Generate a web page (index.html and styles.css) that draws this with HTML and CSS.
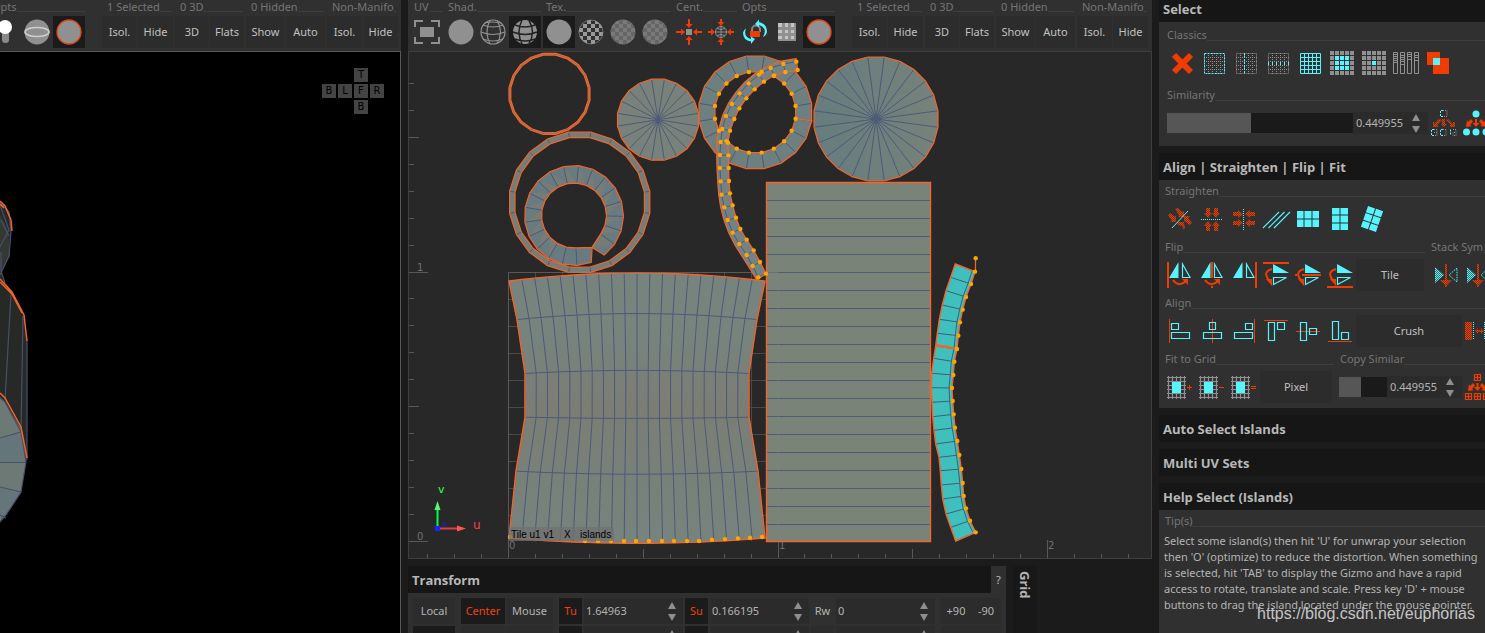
FILE: index.html
```html
<!DOCTYPE html>
<html lang="en">
<head>
<meta charset="utf-8">
<title>UV Editor</title>
<link rel="stylesheet" href="styles.css">
</head>
<body>
<svg class="defs" aria-hidden="true">
  <defs>
    <pattern id="hatch" width="2" height="2" patternUnits="userSpaceOnUse"><path d="M0 0h2v2h-2z" fill="#f03c00" fill-opacity=".35"/><path d="M0 0h1v1h-1zM1 1h1v1h-1z" fill="#f03c00"/></pattern>
    <pattern id="hatchc" width="2" height="2" patternUnits="userSpaceOnUse"><path d="M0 0h2v2h-2z" fill="#55f4ff" fill-opacity=".3"/><path d="M0 0h1v1h-1zM1 1h1v1h-1z" fill="#55f4ff"/></pattern>
    <pattern id="chk" width="8" height="8" patternUnits="userSpaceOnUse"><path d="M0 0h4v4h-4zM4 4h4v4h-4z" fill="#999"/></pattern>
    <pattern id="chk2" width="8" height="8" patternUnits="userSpaceOnUse"><path d="M0 0h8v8h-8z" fill="#797979"/><path d="M0 0h4v4h-4zM4 4h4v4h-4z" fill="#666"/></pattern>
  </defs>
  <symbol id="i-light" viewBox="0 0 32 32"><path d="M13 14h7v10q0 3-3.500 3t-3.500-3z" fill="#8a8a8a"/><circle cx="16" cy="11" r="7" fill="#fff"/></symbol>
  <symbol id="i-halo" viewBox="0 0 32 32"><circle cx="16" cy="16" r="12.500" fill="#909090"/><ellipse cx="16" cy="16" rx="12" ry="4.500" fill="none" stroke="#d0d0d0" stroke-width="1.500"/></symbol>
  <symbol id="i-sel" viewBox="0 0 32 32"><circle cx="16" cy="16" r="12" fill="#909090" stroke="#e04410" stroke-width="1.300"/></symbol>
  <symbol id="i-frame" viewBox="0 0 32 32"><path d="M4 11V5H12M20 5H28V11M28 21V27H20M12 27H4V21" fill="none" stroke="#909090" stroke-width="2"/><path d="M9 11h14v10h-14z" fill="#909090"/></symbol>
  <symbol id="i-disc" viewBox="0 0 32 32"><circle cx="16" cy="16" r="12.500" fill="#909090"/></symbol>
  <symbol id="i-wire" viewBox="0 0 32 32"><g fill="none" stroke="#909090" stroke-width="1.200"><circle cx="16" cy="16" r="12"/><path d="M6 9q10 4 20 0M4 16q12 5 24 0M6 23q10 4 20 0M13 4q-6 12 0 24M20 4.500q7 11.500 0 23M8 7q6-2 16 0"/></g></symbol>
  <symbol id="i-shadewire" viewBox="0 0 32 32"><circle cx="16" cy="16" r="12" fill="#909090"/><path d="M6 9q10 4 20 0M4 16q12 5 24 0M6 23q10 4 20 0M13 4q-6 12 0 24M20 4.500q7 11.500 0 23" fill="none" stroke="#222" stroke-width="1.500"/></symbol>
  <symbol id="i-check" viewBox="0 0 32 32"><circle cx="16" cy="16" r="12" fill="url(#chk)" stroke="#999" stroke-width=".6"/></symbol>
  <symbol id="i-check2" viewBox="0 0 32 32"><circle cx="16" cy="16" r="12.500" fill="url(#chk2)"/></symbol>
  <symbol id="i-center" viewBox="0 0 32 32"><path d="M13 13h6v6h-6z" fill="#909090"/><g fill="#f03c00"><path d="M15 3h2v5h2.500l-3.500 4l-3.500-4h2.500zM15 29h2v-5h2.500l-3.500-4l-3.500 4h2.500zM3 15v2h5v2.500l4-3.500l-4-3.500v2.500zM29 15v2h-5v2.500l-4-3.500l4-3.500v2.500z"/></g></symbol>
  <symbol id="i-centersphere" viewBox="0 0 32 32"><g fill="none" stroke="#909090"><circle cx="16" cy="16" r="5.500"/><path d="M10.500 16h11M16 10.500v11M12 12.500q4 2 8 0M12 19.500q4-2 8 0"/></g><g fill="#f03c00"><path d="M15 3h2v3h2.500l-3.500 4l-3.500-4h2.500zM15 29h2v-3h2.500l-3.500-4l-3.500 4h2.500zM3 15v2h3v2.500l4-3.500l-4-3.500v2.500zM29 15v2h-3v2.500l-4-3.500l4-3.500v2.500z"/></g></symbol>
  <symbol id="i-lock" viewBox="0 0 32 32"><path d="M13 16v-2.500a4 4 0 0 1 8 0v2.500" fill="none" stroke="#888" stroke-width="2"/><path d="M11 15h10v6h-10z" fill="#f03c00"/><g fill="#55f4ff"><path d="M16 8l4-4.500v2.500q8 2 8 10q-1 4-4 5q5-9-4-12v2.500zM16 23l-4 5v-2.500q-8-1-8-9q1-3 3-4q-3 8 5 10.500v-2.500z"/></g></symbol>
  <symbol id="i-plaid" viewBox="0 0 32 32"><path d="M7 7h18v18h-18z" fill="#c4c4c4"/><path d="M11 7h3v18h-3zM17 7h3v18h-3zM23 7h2v18h-2zM7 11h18v3h-18zM7 17h18v3h-18zM7 23h18v2h-18z" fill="#666" fill-opacity=".55"/></symbol>

  <symbol id="i-cross" viewBox="0 0 32 32"><path d="M8 8L25 25M25 8L8 25" stroke="#f03c00" stroke-width="6"/></symbol>
  <symbol id="i-dots" viewBox="0 0 32 32"><path d="M10.500 6v21M14.500 6v21M18.500 6v21M22.500 6v21M6 10.500h21M6 14.500h21M6 18.500h21M6 22.500h21" stroke="#909090" stroke-dasharray="1 1"/></symbol>
  <symbol id="i-gborder" viewBox="0 0 32 32"><use href="#i-dots"/><path d="M6.500 6.500h20v20h-20z" fill="none" stroke="#55f4ff" stroke-dasharray="2 1"/></symbol>
  <symbol id="i-gvert" viewBox="0 0 32 32"><use href="#i-dots"/><path d="M6.500 6.500h20v20h-20z" fill="none" stroke="#909090" stroke-dasharray="1 1"/><path d="M14.500 6v21" stroke="#55f4ff" stroke-dasharray="2 1"/></symbol>
  <symbol id="i-ghoriz" viewBox="0 0 32 32"><use href="#i-dots"/><path d="M6.500 6.500h20v20h-20z" fill="none" stroke="#909090" stroke-dasharray="1 1"/><path d="M6 16.500h21" stroke="#55f4ff" stroke-width="3" stroke-dasharray="1 3"/></symbol>
  <symbol id="i-gfull" viewBox="0 0 32 32"><path d="M6.500 6.500h20v20h-20zM10.500 6v21M14.500 6v21M18.500 6v21M22.500 6v21M6 10.500h21M6 14.500h21M6 18.500h21M6 22.500h21" fill="none" stroke="#55f4ff"/></symbol>
  <symbol id="i-squares" viewBox="0 0 32 32"><path d="M4 6h24M4 11h24M4 16h24M4 21h24M4 26h24" stroke="#909090" stroke-width="4" stroke-dasharray="4 1"/></symbol>
  <symbol id="i-sq9" viewBox="0 0 32 32"><use href="#i-squares"/><path d="M9 11h14M9 16h14M9 21h14" stroke="#55f4ff" stroke-width="4" stroke-dasharray="4 1"/></symbol>
  <symbol id="i-sq1" viewBox="0 0 32 32"><use href="#i-squares"/><path d="M14 14h4v4h-4z" fill="#55f4ff"/></symbol>
  <symbol id="i-bars" viewBox="0 0 32 32"><path d="M3.500 5.500h4v21h-4zM10.500 5.500h4v21h-4zM17.500 5.500h4v21h-4zM24.500 5.500h4v21h-4zM3.500 7.500h4M3.500 9.500h4M3.500 11.500h4M3.500 13.500h4M3.500 15.500h4M10.500 8.500h4M10.500 10.500h4M10.500 12.500h4M10.500 14.500h4M10.500 17.500h4M17.500 7.500h4M17.500 9.500h4M17.500 12.500h4M24.500 8.500h4M24.500 10.500h4M24.500 13.500h4" fill="none" stroke="#909090"/></symbol>
  <symbol id="i-overlap" viewBox="0 0 32 32"><path d="M5 5h13v13h-13zM11 11h16v16h-16z" fill="#f03c00"/><path d="M11 11h7v7h-7z" fill="#55f4ff"/></symbol>
  <symbol id="i-simdots" viewBox="0 0 32 32"><g fill="none" stroke="#909090" stroke-dasharray="1 1"><path d="M15 3.500h4v6h-4M6 22.500h3v6h-3M6 25.500h3M15 22.500h3v6h-3M25 22.500h3v6h-3v-3h3"/></g><g fill="none" stroke="#55f4ff" stroke-dasharray="2 1"><path d="M15 3.500h-2.500v6h2.500M6 22.500h-2.500v6h2.500M15 22.500h-2.500v6h2.500M22.500 22.500v6"/></g><path d="M11 12l-5 5v-2h-1v5h5v-2h-1l5-5zM14 12h3v5h2l-3 3l-3-3h1zM20 12l5 5v-2h2v5h-5v-2h1l-5-5z" fill="url(#hatch)"/></symbol>
  <symbol id="i-simfull" viewBox="0 0 32 32"><g fill="#55f4ff"><circle cx="16" cy="7" r="3.500"/><circle cx="6.500" cy="25" r="3.500"/><circle cx="16" cy="25" r="3.500"/><circle cx="26" cy="25" r="3.500"/></g><path d="M11 12l-3 3l-1-2l-1 7l6-1l-2-1l3-3.500zM15 12h2v4h2.500l-3.500 4l-3.500-4h2.500zM21 12l3 3l1-2l1 7l-6-1l2-1l-3-3.500z" fill="#f03c00"/></symbol>

  <symbol id="i-st1" viewBox="0 0 32 32"><g fill="url(#hatch)"><path d="M4 12l2-2l5 4l1-2v7h-6l2-1zM11 6l3-1l4 4l2-1v6h-6l1-2zM28 20l-3 2l-4-4l-1 1v-6h6l-2 2zM20 27l-2-4l-4-1l-1-3h7v2l1 3z"/></g><path d="M8 25L24 8" stroke="#55f4ff"/></symbol>
  <symbol id="i-st2" viewBox="0 0 32 32"><g fill="url(#hatch)"><path d="M10 5h4v5h2l-4 5l-4-5h2zM18 5h4v5h2l-4 5l-4-5h2zM10 28h4v-5h2l-4-5l-4 5h2zM18 28h4v-5h2l-4-5l-4 5h2z"/></g><path d="M5 16.500h22" stroke="#55f4ff" stroke-dasharray="1 1"/></symbol>
  <symbol id="i-st3" viewBox="0 0 32 32"><g fill="url(#hatch)"><path d="M5 9v4h5v2l5-4l-5-4v2zM5 18v4h5v2l5-4l-5-4v2zM27 9v4h-5v2l-5-4l5-4v2zM27 18v4h-5v2l-5-4l5-4v2z"/></g><path d="M15.500 6v22" stroke="#55f4ff" stroke-dasharray="1 1"/></symbol>
  <symbol id="i-st4" viewBox="0 0 32 32"><path d="M3 25L19 9M8.500 25L24.500 9M14 25L30 9" stroke="#55f4ff" stroke-width="1.100"/></symbol>
  <symbol id="i-st5" viewBox="0 0 32 32"><path d="M5 8h6.500v7.500h-6.500zM12.500 8h7v7.500h-7zM20.500 8h6.500v7.500h-6.500zM5 16.500h6.500v7.500h-6.500zM12.500 16.500h7v7.500h-7zM20.500 16.500h6.500v7.500h-6.500z" fill="#55f4ff"/></symbol>
  <symbol id="i-st6" viewBox="0 0 32 32"><path d="M8 5v6.500h7.500v-6.500zM8 12.500v7h7.500v-7zM8 20.500v6.500h7.500v-6.500zM16.500 5v6.500h7.500v-6.500zM16.500 12.500v7h7.500v-7zM16.500 20.500v6.500h7.500v-6.500z" fill="#55f4ff"/></symbol>
  <symbol id="i-st7" viewBox="0 0 32 32"><g transform="rotate(19 16 16)"><use href="#i-st6"/></g></symbol>
  <symbol id="i-tri" viewBox="0 0 32 32"><path d="M14.500 3v16h-9.500z" fill="#55f4ff"/><path d="M18.500 5v13.500h7.500z" fill="none" stroke="#55f4ff" stroke-width="1.200"/></symbol>
  <symbol id="i-turn" viewBox="0 0 32 32"><path d="M9 21q6 8 13 1" fill="none" stroke="#f03c00" stroke-width="2"/><path d="M18 20h6v6z" fill="#f03c00"/></symbol>
  <symbol id="i-fl1" viewBox="0 0 32 32"><use href="#i-tri"/><use href="#i-turn"/><path d="M4 3v26" stroke="#f03c00" stroke-width="2"/></symbol>
  <symbol id="i-fl2" viewBox="0 0 32 32"><use href="#i-tri"/><use href="#i-turn"/><path d="M16 3v16M16 27v2" stroke="#f03c00" stroke-width="2"/></symbol>
  <symbol id="i-fl3" viewBox="0 0 32 32"><use href="#i-tri"/><path d="M28 3v26" stroke="#f03c00" stroke-width="2"/></symbol>
  <symbol id="i-trih" viewBox="0 0 32 32"><path d="M13 5v9h16z" fill="#55f4ff"/><path d="M13.500 18.500h13l-13 7z" fill="none" stroke="#55f4ff" stroke-width="1.200"/><path d="M12 10q-10 3-3 11" fill="none" stroke="#f03c00" stroke-width="2"/><path d="M6 20h6v7z" fill="#f03c00"/></symbol>
  <symbol id="i-fl4" viewBox="0 0 32 32"><use href="#i-trih"/><path d="M3 4h26" stroke="#f03c00" stroke-width="2"/></symbol>
  <symbol id="i-fl5" viewBox="0 0 32 32"><use href="#i-trih"/><path d="M3 16h2M10 16h19" stroke="#f03c00" stroke-width="2"/></symbol>
  <symbol id="i-fl6" viewBox="0 0 32 32"><use href="#i-trih"/><path d="M3 28h26" stroke="#f03c00" stroke-width="2"/></symbol>
  <symbol id="i-stack" viewBox="0 0 32 32"><path d="M5 8l9 8l-9 8z" fill="url(#hatchc)"/><path d="M27 9l-8 7l8 7z" fill="none" stroke="#55f4ff" stroke-dasharray="1.500 1"/><path d="M15 5h2v23h-2zM10 21h12l-6 6z" fill="url(#hatch)"/></symbol>
  <symbol id="i-al1" viewBox="0 0 32 32"><path d="M5.500 4v24" stroke="#f03c00"/><path d="M7.500 8.500h7v6h-7zM7.500 17.500h18v6h-18z" fill="none" stroke="#55f4ff" stroke-width="1.200"/></symbol>
  <symbol id="i-al2" viewBox="0 0 32 32"><path d="M16.500 4v24" stroke="#f03c00"/><path d="M13.500 7.500h6v7h-6zM7.500 17.500h18v6h-18z" fill="none" stroke="#55f4ff" stroke-width="1.200"/></symbol>
  <symbol id="i-al3" viewBox="0 0 32 32"><path d="M26.500 4v24" stroke="#f03c00"/><path d="M17.500 8.500h7v6h-7zM6.500 17.500h18v6h-18z" fill="none" stroke="#55f4ff" stroke-width="1.200"/></symbol>
  <symbol id="i-al4" viewBox="0 0 32 32"><path d="M4 5.500h24" stroke="#f03c00"/><path d="M8.500 7.500h6v18h-6zM17.500 7.500h7v7h-7z" fill="none" stroke="#55f4ff" stroke-width="1.200"/></symbol>
  <symbol id="i-al5" viewBox="0 0 32 32"><path d="M4 16.500h24" stroke="#f03c00"/><path d="M8.500 7.500h6v18h-6zM17.500 13.500h7v6h-7z" fill="none" stroke="#55f4ff" stroke-width="1.200"/></symbol>
  <symbol id="i-al6" viewBox="0 0 32 32"><path d="M4 26.500h24" stroke="#f03c00"/><path d="M8.500 6.500h6v18h-6zM17.500 17.500h7v7h-7z" fill="none" stroke="#55f4ff" stroke-width="1.200"/></symbol>
  <symbol id="i-crush" viewBox="0 0 32 32"><path d="M3 7h7v18h-7zM24 7h6v18h-6zM13 16l3-3v2h3v-2l3 3l-3 3v-2h-3v2z" fill="url(#hatch)"/><path d="M11.500 7v18M22.500 7v18" stroke="#55f4ff" stroke-dasharray="1 1"/></symbol>
  <symbol id="i-fit" viewBox="0 0 32 32"><path d="M4.500 5v23M8.500 5v23M12.500 5v23M16.500 5v23M20.500 5v23M3 6.500h19M3 10.500h19M3 14.500h19M3 18.500h19M3 22.500h19M3 26.500h19" stroke="#909090" stroke-width="1.200"/><path d="M8 11h9v11h-9z" fill="#55f4ff"/></symbol>
  <symbol id="i-fitp" viewBox="0 0 32 32"><use href="#i-fit"/><path d="M23 16.500h5M25.500 14v5" stroke="#f03c00"/></symbol>
  <symbol id="i-fitm" viewBox="0 0 32 32"><use href="#i-fit"/><path d="M23 16.500h5" stroke="#f03c00"/></symbol>
  <symbol id="i-fite" viewBox="0 0 32 32"><use href="#i-fit"/><path d="M23 15.500h5M23 17.500h5" stroke="#f03c00" stroke-width="1.200"/></symbol>
  <symbol id="i-copy" viewBox="0 0 32 32"><path d="M12.500 3.500h6v6h-6zM12.500 6.500h6M15.500 3.500v6M3.500 22.500h6v6h-6zM3.500 25.500h6M6.500 22.500v6M12.500 22.500h6v6h-6zM12.500 25.500h6M15.500 22.500v6M21.500 22.500h6v6h-6zM21.500 25.500h6M24.500 22.500v6" fill="none" stroke="#f03c00" stroke-width="1.200"/><path d="M11 12l-3 3l-1-2l-1 7l6-1l-2-1l3-3.500zM14.500 12h2v4h2.500l-3.500 4l-3.500-4h2.500zM20 12l3 3l1-2l1 7l-6-1l2-1l-3-3.500z" fill="#f03c00"/></symbol>
</svg>

<main class="app">
  <section class="pane pane-3d">
    <div class="toolbar toolbar-end">
      <div class="group"><div class="label">Opts</div><div class="row"><button class="icon" aria-label="Light"><svg><use href="#i-light"/></svg></button><button class="icon" aria-label="Halo"><svg><use href="#i-halo"/></svg></button><button class="icon on" aria-label="Selection"><svg><use href="#i-sel"/></svg></button></div></div>
      <div class="textgroups">
        <div class="group"><div class="label">1 Selected</div><div class="row tight"><button class="word">Isol.</button><button class="word">Hide</button></div></div>
        <div class="group narrow"><div class="label">0 3D</div><div class="row tight"><button class="word">3D</button><button class="word">Flats</button></div></div>
        <div class="group wide"><div class="label">0 Hidden</div><div class="row tight"><button class="word">Show</button><button class="word">Auto</button></div></div>
        <div class="group"><div class="label">Non-Manifo</div><div class="row tight"><button class="word">Isol.</button><button class="word">Hide</button></div></div>
      </div>
    </div>
    <div class="view3d">
      <svg class="scene" viewBox="0 52 400 581" preserveAspectRatio="xMinYMin meet">
        <path d="M0 202L5 206L11 221L11 238L9 256L1 271L5 282L12 292L23 314L27 340L27 457L20 495L0 522z" fill="#262925"/>
        <path d="M0 214L8 230L9 240L10 256L1 271H0z" fill="#343833"/>
        <path d="M0 397L5 402L21 429L26 462L21 492L6 515L0 521z" fill="#6d7974"/>
        <path d="M0 440L21 432L26 462H0zM0 487L21 492L6 515L0 519z" fill="#647679"/>
        <path d="M0 202L9 212L11 232L9 256L0 275M0 205L9 230L0 247M1 220L9 236M1 252V271L5 283M11 294L5 400M23 316L21 430M27 340V460M0 398L5 402L21 432L26 462L21 492L6 515L0 522M0 438L21 432M0 462.500H26M0 487L21 492M0 515L6 518" fill="none" stroke="#465069" stroke-width="1.200"/>
        <path d="M0 201L5 206L11 220L12 231M0 204L4 208M0 279L12 292L24 315L27 341M0 282L12 294L22 313M0 393L5 398L21 427L27 458" fill="none" stroke="#f2642a" stroke-width="1.500"/>
      </svg>
      <div class="cube"><button class="c-t">T</button><button class="c-b">B</button><button class="c-l">L</button><button class="c-f">F</button><button class="c-r">R</button><button class="c-d">B</button></div>
    </div>
  </section>

  <section class="pane pane-uv">
    <div class="toolbar">
      <div class="group"><div class="label">UV</div><div class="row"><button class="icon" aria-label="Frame"><svg><use href="#i-frame"/></svg></button></div></div>
      <div class="group"><div class="label">Shad.</div><div class="row"><button class="icon" aria-label="Flat"><svg><use href="#i-disc"/></svg></button><button class="icon" aria-label="Wire"><svg><use href="#i-wire"/></svg></button><button class="icon on" aria-label="Shaded wire"><svg><use href="#i-shadewire"/></svg></button></div></div>
      <div class="group"><div class="label">Tex.</div><div class="row"><button class="icon on" aria-label="No texture"><svg><use href="#i-disc"/></svg></button><button class="icon" aria-label="Checker"><svg><use href="#i-check"/></svg></button><button class="icon" aria-label="Texture"><svg><use href="#i-check2"/></svg></button><button class="icon" aria-label="Custom texture"><svg><use href="#i-check2"/></svg></button></div></div>
      <div class="group"><div class="label">Cent.</div><div class="row"><button class="icon" aria-label="Center"><svg><use href="#i-center"/></svg></button><button class="icon" aria-label="Center object"><svg><use href="#i-centersphere"/></svg></button></div></div>
      <div class="group"><div class="label">Opts</div><div class="row"><button class="icon" aria-label="Lock"><svg><use href="#i-lock"/></svg></button><button class="icon" aria-label="Pixels"><svg><use href="#i-plaid"/></svg></button><button class="icon on" aria-label="Selection"><svg><use href="#i-sel"/></svg></button></div></div>
      <div class="textgroups">
        <div class="group"><div class="label">1 Selected</div><div class="row tight"><button class="word">Isol.</button><button class="word">Hide</button></div></div>
        <div class="group narrow"><div class="label">0 3D</div><div class="row tight"><button class="word">3D</button><button class="word">Flats</button></div></div>
        <div class="group wide"><div class="label">0 Hidden</div><div class="row tight"><button class="word">Show</button><button class="word">Auto</button></div></div>
        <div class="group"><div class="label">Non-Manifo</div><div class="row tight"><button class="word">Isol.</button><button class="word">Hide</button></div></div>
      </div>
    </div>
    <div class="uvview"><svg id="uv" class="scene" viewBox="408 51 744 508"></svg></div>
    <div class="bottom">
      <section class="transform">
        <header class="head"><h2>Transform</h2><button class="help">?</button></header>
        <div class="tbody">
          <div class="trow">
            <button class="cell w42">Local</button>
            <div class="seg"><button class="cell w44 on hot">Center</button><button class="cell w47">Mouse</button></div>
            <div class="field"><button class="cell key on hot">Tu</button><label class="num"><input type="text" aria-label="Translate U" value="1.64963"><span class="spin"></span></label><button class="cell key on hot">Su</button><label class="num"><input type="text" aria-label="Scale U" value="0.166195"><span class="spin"></span></label><button class="cell key plain">Rw</button><label class="num"><input type="text" aria-label="Rotate W" value="0"><span class="spin"></span></label></div>
            <div class="seg last"><button class="cell w30">+90</button><button class="cell w30">-90</button></div>
          </div>
          <div class="trow">
            <button class="cell w42 on" aria-label="Mode"></button>
            <div class="seg"><button class="cell w44" aria-label="Multi"></button><button class="cell w47" aria-label="Pivot"></button></div>
            <div class="field"><button class="cell key on" aria-label="Tv"></button><label class="num"><input type="text" aria-label="Translate V"><span class="spin"></span></label><button class="cell key on" aria-label="Sv"></button><label class="num"><input type="text" aria-label="Scale V"><span class="spin"></span></label><button class="cell key" aria-label="Step"></button><label class="num"><input type="text" aria-label="Step value"><span class="spin"></span></label></div>
            <div class="seg last"><button class="cell w30" aria-label="Plus"></button><button class="cell w30" aria-label="Minus"></button></div>
          </div>
        </div>
      </section>
      <button class="gridtab">Grid</button>
    </div>
  </section>

  <aside class="side">
    <section class="panel first">
      <h2 class="head">Select</h2>
      <div class="pbody select">
        <div class="label">Classics</div>
        <div class="row"><button class="icon" aria-label="Clear"><svg><use href="#i-cross"/></svg></button><button class="icon" aria-label="Border"><svg><use href="#i-gborder"/></svg></button><button class="icon" aria-label="Column"><svg><use href="#i-gvert"/></svg></button><button class="icon" aria-label="Row"><svg><use href="#i-ghoriz"/></svg></button><button class="icon" aria-label="All"><svg><use href="#i-gfull"/></svg></button><button class="icon" aria-label="Grow"><svg><use href="#i-sq9"/></svg></button><button class="icon" aria-label="Shrink"><svg><use href="#i-sq1"/></svg></button><button class="icon" aria-label="Bars"><svg><use href="#i-bars"/></svg></button><button class="icon" aria-label="Overlaps"><svg><use href="#i-overlap"/></svg></button></div>
        <div class="label sim">Similarity</div>
        <div class="row mid"><input class="slider big" type="range" aria-label="Similarity" min="0" max="1" step="any" value="0.449955"><label class="num small"><input type="text" aria-label="Similarity value" value="0.449955"><span class="spin"></span></label><button class="icon" aria-label="Similar dotted"><svg><use href="#i-simdots"/></svg></button><button class="icon" aria-label="Similar"><svg><use href="#i-simfull"/></svg></button></div>
      </div>
    </section>
    <section class="panel">
      <h2 class="head">Align | Straighten | Flip | Fit</h2>
      <div class="pbody align">
        <div class="label top">Straighten</div>
        <div class="row"><button class="icon" aria-label="Straighten"><svg><use href="#i-st1"/></svg></button><button class="icon" aria-label="Straighten horizontally"><svg><use href="#i-st2"/></svg></button><button class="icon" aria-label="Straighten vertically"><svg><use href="#i-st3"/></svg></button><button class="icon" aria-label="Parallel"><svg><use href="#i-st4"/></svg></button><button class="icon" aria-label="Wide"><svg><use href="#i-st5"/></svg></button><button class="icon" aria-label="Tall"><svg><use href="#i-st6"/></svg></button><button class="icon" aria-label="Rotated"><svg><use href="#i-st7"/></svg></button></div>
        <div class="pair">
          <div class="sub flip"><div class="label">Flip</div><div class="row"><button class="icon" aria-label="Flip left"><svg><use href="#i-fl1"/></svg></button><button class="icon" aria-label="Flip center"><svg><use href="#i-fl2"/></svg></button><button class="icon" aria-label="Flip right"><svg><use href="#i-fl3"/></svg></button><button class="icon" aria-label="Flip top"><svg><use href="#i-fl4"/></svg></button><button class="icon" aria-label="Flip middle"><svg><use href="#i-fl5"/></svg></button><button class="icon" aria-label="Flip bottom"><svg><use href="#i-fl6"/></svg></button><button class="big-btn tile">Tile</button></div></div>
          <div class="sub"><div class="label">Stack Sym</div><div class="row"><button class="icon" aria-label="Stack"><svg><use href="#i-stack"/></svg></button><button class="icon" aria-label="Stack all"><svg><use href="#i-stack"/></svg></button></div></div>
        </div>
        <div class="label">Align</div>
        <div class="row"><button class="icon" aria-label="Align left"><svg><use href="#i-al1"/></svg></button><button class="icon" aria-label="Align center"><svg><use href="#i-al2"/></svg></button><button class="icon" aria-label="Align right"><svg><use href="#i-al3"/></svg></button><button class="icon" aria-label="Align top"><svg><use href="#i-al4"/></svg></button><button class="icon" aria-label="Align middle"><svg><use href="#i-al5"/></svg></button><button class="icon" aria-label="Align bottom"><svg><use href="#i-al6"/></svg></button><button class="big-btn crush">Crush</button><button class="icon" aria-label="Crush inward"><svg><use href="#i-crush"/></svg></button></div>
        <div class="pair">
          <div class="sub fit"><div class="label">Fit to Grid</div><div class="row"><button class="icon" aria-label="Fit plus"><svg><use href="#i-fitp"/></svg></button><button class="icon" aria-label="Fit minus"><svg><use href="#i-fitm"/></svg></button><button class="icon" aria-label="Fit equal"><svg><use href="#i-fite"/></svg></button><button class="big-btn pixel">Pixel</button></div></div>
          <div class="sub"><div class="label">Copy Similar</div><div class="row mid"><input class="slider little" type="range" aria-label="Copy similarity" min="0" max="1" step="any" value="0.449955"><label class="num small"><input type="text" aria-label="Copy similarity value" value="0.449955"><span class="spin"></span></label><button class="icon" aria-label="Copy similar"><svg><use href="#i-copy"/></svg></button></div></div>
        </div>
      </div>
    </section>
    <section class="panel"><h2 class="head">Auto Select Islands</h2></section>
    <section class="panel"><h2 class="head">Multi UV Sets</h2></section>
    <section class="panel grow">
      <h2 class="head">Help Select (Islands)</h2>
      <div class="pbody tips">
        <div class="label top">Tip(s)</div>
        <p>Select some island(s) then hit 'U' for unwrap your selection<br>then 'O' (optimize) to reduce the distortion. When something<br>is selected, hit 'TAB' to display the Gizmo and have a rapid<br>access to rotate, translate and scale. Press key 'D' + mouse<br>buttons to drag the island located under the mouse pointer.</p>
      </div>
    </section>
  </aside>
</main>
<div class="watermark">https://blog.csdn.net/euphorias</div>
<script src="mesh.js"></script>
</body>
</html>
```
FILE: styles.css
```css
* { box-sizing: border-box; }
body {
  margin: 0;
  height: 100vh;
  overflow: hidden;
  background: #1b1b1b;
  color: #b4b4b4;
  font: 11px/16px "Noto Sans", "Open Sans", sans-serif;
}
button, input { font: inherit; color: inherit; border: 0; padding: 0; margin: 0; background: none; border-radius: 0; }
h2 { margin: 0; font-family: "Open Sans", "Noto Sans", sans-serif; font-size: 13px; font-weight: 700; }
.defs { position: absolute; width: 0; height: 0; }
.app {
  display: grid;
  grid-template-columns: minmax(0, 401fr) minmax(0, 744fr) minmax(0, 326fr);
  column-gap: 7px;
  height: 100%;
}
.pane { display: flex; flex-direction: column; min-height: 0; min-width: 0; }
.toolbar {
  display: flex;
  gap: 2px;
  height: 51px;
  padding: 0 3px;
  background: #303030;
  overflow: hidden;
  flex: none;
}
.toolbar-end { justify-content: flex-end; }
.textgroups { display: flex; gap: 2px; margin-left: 15px; }
.group { flex: none; }
.label { display: flex; color: #757575; white-space: nowrap; }
.label::after { content: ""; flex: 1; border-bottom: 1px solid #3e3e3e; margin-bottom: 5px; }
.toolbar .label { height: 16px; line-height: 14px; padding: 0 0 0 3px; }
.toolbar .textgroups .label { padding: 0 1px 0 5px; }
.toolbar .label::after { margin-bottom: 4px; }
.row { display: flex; }
.tight { gap: 1px; }
.icon { width: 32px; height: 32px; flex: none; }
.icon svg { display: block; width: 32px; height: 32px; }
.on { background: #1b1b1b; }
.word { width: 35px; height: 32px; background: #2c2c2c; color: #c0c0c0; }
.narrow .word { width: 34px; }
.wide .word { width: 39px; }
.hot { color: #f04010; }

.view3d { position: relative; flex: 1; min-height: 0; background: #000; border: 1px solid #585858; border-width: 1px 1px 0 0; }
.scene { display: block; width: 100%; height: 100%; }
.cube {
  position: absolute;
  top: 16px;
  right: 16px;
  display: grid;
  grid-template: repeat(3, 14px) / repeat(4, 14px);
  grid-template-areas: ". . t ." "b l f r" ". . d .";
  gap: 2px;
}
.cube button { background: #444; color: #000; font: 10px/14px "DejaVu Sans", sans-serif; }
.c-t { grid-area: t; }
.c-b { grid-area: b; }
.c-l { grid-area: l; }
.c-f { grid-area: f; }
.c-r { grid-area: r; }
.c-d { grid-area: d; }

.uvview { flex: 1; min-height: 0; background: #282828; }
.bottom { display: flex; gap: 7px; margin-top: 7px; height: 67px; overflow: hidden; flex: none; }
.transform { flex: 0 1 598px; min-width: 0; background: #303030; }
.head { height: 27px; background: #161616; color: #b8b8b8; line-height: 28px; padding-left: 4px; white-space: nowrap; }
header.head { display: flex; justify-content: space-between; }
.help { width: 15px; background: #303030; }
.tbody { padding: 5px; }
.trow { display: flex; gap: 6px; margin-bottom: 2px; }
.seg { display: flex; gap: 1px; }
.last { gap: 0; }
.cell { height: 26px; background: #2c2c2c; white-space: nowrap; flex: none; }
.cell.on { background: #1b1b1b; }
.plain { background: none; }
.w42 { width: 42px; }
.w44 { width: 44px; }
.w47 { width: 47px; }
.w30 { width: 30px; }
.key { width: 23px; }
.field { display: flex; gap: 2px; }
.num { display: flex; align-items: center; width: 99px; height: 26px; background: #2b2b2b; padding: 0 7px 0 2px; }
.num input { flex: 1; min-width: 0; width: 0; }
.spin { display: flex; flex-direction: column; gap: 5px; }
.spin::before, .spin::after { content: ""; border: solid transparent; border-width: 0 4px; width: 0; }
.spin::before { border-bottom: 7px solid #8e8e8e; }
.spin::after { border-top: 7px solid #8e8e8e; }
.gridtab {
  width: 24px;
  background: #181818;
  writing-mode: vertical-rl;
  text-align: left;
  padding-top: 5px;
  font-family: "Open Sans", "Noto Sans", sans-serif;
  font-size: 13px;
  font-weight: 700;
}

.side { display: flex; flex-direction: column; gap: 7px; min-height: 0; overflow: hidden; }
.panel { flex: none; }
.first .head { height: 22px; line-height: 18px; }
.grow { flex: 1; display: flex; flex-direction: column; }
.pbody { background: #303030; overflow: hidden; }
.pbody .label { height: 24px; line-height: 24px; padding-left: 1px; }
.pbody .label::after { margin-bottom: 6px; }
.pbody .top { height: 23px; line-height: 22px; }
.select { padding: 1px 0 7px 7px; }
.sim { margin-top: 4px; }
.align { padding: 0 0 5px 5px; }
.mid { align-items: center; height: 32px; }
.big-btn { height: 32px; background: #2c2c2c; flex: none; color: #c0c0c0; }
.tile { width: 68px; }
.crush { width: 106px; }
.pixel { width: 72px; }
.pair { display: flex; gap: 5px; }
.sub { flex: 1 0 auto; }
.flip { flex: none; width: 261px; }
.fit { flex: none; width: 170px; }
.small { width: 75px; height: 22px; padding: 0 8px 0 3px; flex: none; }
.slider { appearance: none; height: 20px; background: #1a1a1a; overflow: hidden; flex: none; }
.slider::-webkit-slider-thumb { appearance: none; width: 1px; height: 20px; background: #565656; box-shadow: -200px 0 0 200px #565656; }
.big { width: 186px; margin-left: 1px; }
.little { width: 48px; }
.tips { flex: 1; padding-left: 5px; }
.tips p { margin: 0; white-space: nowrap; }
.watermark {
  position: absolute;
  right: 10px;
  bottom: 9px;
  font: 16px/20px "Liberation Sans", sans-serif;
  color: rgba(225, 225, 225, .85);
}
```
FILE: mesh.js
```js
const NS = "http://www.w3.org/2000/svg";
const uv = document.getElementById("uv");
const ORANGE = "#f2642a", BLUE = "#4d5a78", DOT = "#ffa500";

function add(tag, attrs, text) {
  const el = document.createElementNS(NS, tag);
  for (const key in attrs) el.setAttribute(key, attrs[key]);
  if (text) el.textContent = text;
  uv.appendChild(el);
  return el;
}
const path = (pts, closed) => "M" + pts.map(p => p[0].toFixed(1) + " " + p[1].toFixed(1)).join("L") + (closed ? "z" : "");
const line = (d, stroke, width = 1) => add("path", { d, fill: "none", stroke, "stroke-width": width });
const dots = pts => pts.forEach(p => add("circle", { cx: p[0], cy: p[1], r: 2.2, fill: DOT }));
const scale = (pts, ox, oy) => pts.map(p => [ox + p[0] / 3, oy + p[1] / 3]);

function circle(cx, cy, r, n, start = 0.5) {
  const pts = [];
  for (let i = 0; i < n; i++) {
    const a = (i + start) * 2 * Math.PI / n;
    pts.push([cx + r * Math.cos(a), cy + r * Math.sin(a)]);
  }
  return pts;
}
function ring(cx, cy, outer, inner, n, fill, start = 0.5) {
  const a = circle(cx, cy, outer, n, start), b = circle(cx, cy, inner, n, start);
  add("path", { d: path(a, true) + path(b, true), fill, "fill-rule": "evenodd" });
  line(a.map((p, i) => path([p, b[i]])).join(""), BLUE);
  line(path(a, true) + path(b, true), ORANGE, 1.2);
  return b;
}
function disc(cx, cy, r, n, fill) {
  const a = circle(cx, cy, r, n);
  add("path", { d: path(a, true), fill });
  line(a.map(p => path([p, [cx, cy]])).join(""), BLUE);
  line(path(a, true), ORANGE, 1.2);
}
function gradient(id, stops, vertical) {
  const g = add("linearGradient", { id, x1: 0, y1: 0, x2: vertical ? 0 : 1, y2: vertical ? 1 : 0 });
  stops.forEach((c, i) => {
    const s = document.createElementNS(NS, "stop");
    s.setAttribute("offset", i / (stops.length - 1));
    s.setAttribute("stop-color", c);
    g.appendChild(s);
  });
  return `url(#${id})`;
}

// Rulers
let ticks = "";
for (let k = -3; k <= 23; k++) {
  const x = Math.round(508 + k * 26.95) + 0.5;
  const len = k % 10 === 0 ? 18 : k % 5 === 0 ? 9 : 4;
  ticks += `M${x} 558v${-len}`;
}
for (let k = 0; k <= 17; k++) {
  const y = Math.round(541 - k * 26.95) + 0.5;
  const len = k % 10 === 0 ? 19 : k % 5 === 0 ? 10 : 5;
  ticks += `M409 ${y}h${len}`;
}
line(ticks, "#585858");
line("M408.5 51V558.5H1151.5V51M408 51.500H1152", "#3e3e3e");
[["0", 509, 549], ["1", 779, 549], ["2", 1048, 549], ["1", 417, 271], ["0", 417, 540]].forEach(t =>
  add("text", { x: t[1], y: t[2], fill: "#707070", "font-size": 10, "font-family": "DejaVu Sans, sans-serif" }, t[0]));

// Tile grid
let grid = "";
for (let k = 1; k < 10; k++) {
  const o = Math.round(k * 26.95);
  grid += `M${508.5 + o} 272.5V541.5M508.5 ${272.5 + o}H778.5`;
}
line(grid, "#484848");

// Rings and discs
ring(549.5, 93.8, 41, 39.2, 20, "#80766c");
ring(579.7, 202.3, 71, 65.5, 20, "#6f7f7c");
disc(658, 119.7, 41, 20, "#78827a");
const discFill = gradient("disc", ["#667c7e", "#77827a"], false);
disc(876, 119, 62.5, 24, discFill);
const loop = ring(755.3, 112.3, 57, 40.8, 20, "#6d7f7e");
line(path([loop[0], [812.5, 121]]), ORANGE, 1.2);

// Open ring
const outer = [], inner = [];
for (let i = 0; i <= 20; i++) {
  const a = (69.5 + i * 17.14) * Math.PI / 180;
  const open = i === 0 || i === 20;
  outer.push([574 + 49.5 * Math.cos(a), 215.5 + 50 * Math.sin(a)]);
  inner.push(open ? [592, 247.3] : [574 + 32.5 * Math.cos(a), 215.5 + 32.5 * Math.sin(a)]);
}
for (let i = 0; i < 20; i++) {
  add("path", { d: path([outer[i], outer[i + 1], inner[i + 1], inner[i]], true), fill: "#677b80" });
  if (i > 2) add("path", { d: path([outer[i], inner[i + 1], inner[i]], true), fill: "#777c76" });
}
line(outer.map((p, i) => path([p, inner[i]])).join(""), BLUE);
line(path(outer.concat(inner.slice().reverse()), true), ORANGE, 1.2);

// Body
const sideX = t => {
  const k = [[0, 509], [0.15, 517], [0.36, 525], [0.53, 525], [0.74, 516], [1, 509]];
  for (let i = 1; i < k.length; i++) if (t <= k[i][0]) {
    const u = (t - k[i - 1][0]) / (k[i][0] - k[i - 1][0]);
    return k[i - 1][1] + u * (k[i][1] - k[i - 1][1]);
  }
  return 509;
};
const body = (s, t) => {
  const left = sideX(t), bow = (1 - (2 * s - 1) ** 2) * 8;
  return [left + s * (1274 - 2 * left), 281 + t * 257 + bow * (t < 0.45 ? -(1 - t * 1.7) : (t - 0.4) * 1.1)];
};
const run = n => Array.from({ length: n + 1 }, (_, i) => i / n);
const levels = [0, 0.15, 0.36, 0.53, 0.74, 1];
const outline = run(20).map(s => body(s, 0)).concat(levels.map(t => body(1, t)), run(20).map(s => body(1 - s, 1)), levels.map(t => body(0, t)).reverse());
add("path", { d: path(outline, true), fill: gradient("bodyfill", ["#77837d", "#77837d", "#7c7d74", "#77817a", "#77837d"], true) });
line(run(20).map(s => path(levels.map(t => body(s, t)))).join("") + levels.slice(1, -1).map(t => path(run(20).map(s => body(s, t)))).join(""), BLUE);
line(path(outline, true), ORANGE, 1.4);

// Rectangle
add("rect", { x: 766.5, y: 183, width: 164, height: 358, fill: "#7a8378" });
let rows = "";
for (let k = 1; k < 20; k++) rows += `M766 ${Math.round(182.5 + k * 17.95) + 0.5}H931`;
line(rows, BLUE);
line("M766.5 182.500H930.500V541.500H766.500z", ORANGE, 1.4);
line("M508.500 541V272.500H778.500V541", "#808080").setAttribute("opacity", 0.55);

// Curved strip across the loop
const left = scale([[919,35],[880,42],[842,54],[807,74],[776,100],[749,130],[726,162],[708,198],[697,237],[692,276],[690,315],[690,354],[692,394],[695,434],[703,472],[713,510],[728,548],[748,582],[770,615],[788,648],[805,682]], 490, 50);
const right = scale([[923,60],[886,66],[852,76],[822,95],[794,118],[769,145],[748,175],[733,207],[720,242],[714,278],[715,316],[716,354],[717,393],[720,430],[728,466],[738,503],[751,537],[770,569],[791,601],[810,636],[828,671]], 490, 50);
const edge = scale([[918,26],[870,34],[830,50],[798,68],[765,96],[740,124],[716,158],[698,196],[686,237],[681,276],[680,315],[681,354],[683,394],[686,434],[692,472],[702,510],[716,548],[736,587],[760,625],[782,660],[800,690]], 490, 50);
const strip = path(edge.concat(right.slice().reverse()), true);
add("path", { d: strip, fill: "#748283" });
line(left.map((p, i) => path([p, right[i]])).join("") + path(left), BLUE);
line(strip, ORANGE, 1.2);
dots(left);
dots(right);
dots(loop);

// Selected strip
const cl = scale([[166,72],[152,112],[138,152],[127,195],[118,238],[112,280],[107,318],[101,355],[95,400],[94,443],[96,487],[98,530],[102,571],[107,612],[117,652],[121,692],[124,735],[128,777],[138,822],[152,862],[167,903]], 900, 240);
const cr = scale([[225,95],[213,132],[198,171],[188,209],[180,247],[175,287],[171,327],[163,365],[160,405],[156,444],[158,483],[161,523],[165,563],[172,603],[178,645],[184,687],[188,729],[191,768],[198,805],[210,842],[227,877]], 900, 240);
const band = path(cl.concat(cr.slice().reverse()), true);
add("path", { d: band, fill: "#3fc0bd" });
line(cl.map((p, i) => path([p, cr[i]])).join("") + path(cr.map(p => [p[0] - 3, p[1] - 0.5])), "#3f5f78");
line(band + path([cl[6], cr[6]]) + path([[935.5, 344.5], [957, 348.5]]), ORANGE, 1.4);
line("M975.500 258V271", ORANGE, 1.2);
dots(cr.concat([[975.7, 258.3]]));

// Bottom vertices and tile caption
dots([585, 598, 611, 624, 636, 649, 662, 674, 687, 699, 712, 725, 738, 750, 762].map((x, i) => [x, i > 9 ? 540.5 - (i - 9) * 0.7 : 541]).concat([[510, 537]]));
add("rect", { x: 509, y: 527, width: 105, height: 14, fill: "#707070", opacity: 0.75 });
[["Tile u1 v1", 511], ["X", 564], ["islands", 580]].forEach(t =>
  add("text", { x: t[1], y: 538, fill: "#000", "font-size": 10, "font-family": "Liberation Sans, sans-serif" }, t[0]));

// Axes
line("M437.500 528V506", "#00ff40", 2);
add("path", { d: "M434.500 510L437.500 501L440.500 510z", fill: "#4dff6a" });
line("M438 528.500H459", "#e04040", 2);
add("path", { d: "M457 525.500L466 528.500L457 531.500z", fill: "#ff5555" });
add("rect", { x: 435, y: 526, width: 5, height: 5, fill: "#2020ff" });
add("text", { x: 438, y: 493, fill: "#30ff50", "font-size": 11, "font-family": "DejaVu Sans, sans-serif" }, "v");
add("text", { x: 473, y: 529, fill: "#ff4040", "font-size": 12, "font-family": "DejaVu Sans, sans-serif" }, "u");
line("M442 522L447 527M446 522L442 527", "#2020dd");
```
